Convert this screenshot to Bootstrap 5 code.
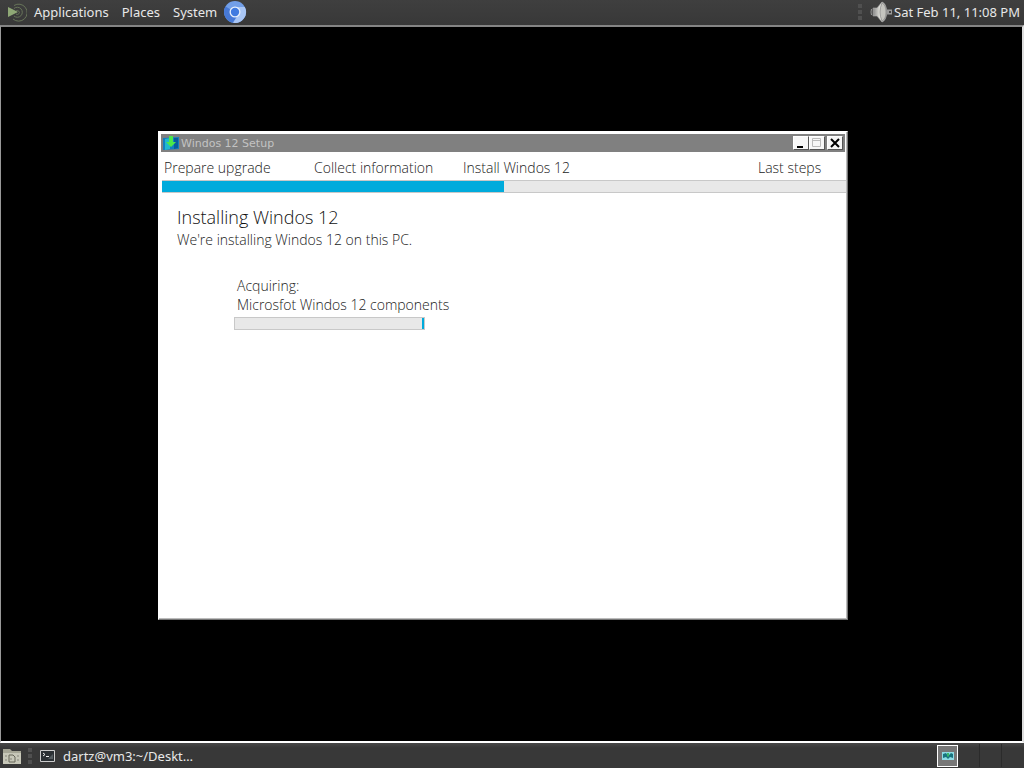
<!DOCTYPE html>
<html lang="en">
<head>
<meta charset="utf-8">
<meta name="viewport" content="width=device-width, initial-scale=1">
<title>Windos 12 Setup</title>
<link href="https://cdn.jsdelivr.net/npm/bootstrap@5.3.0/dist/css/bootstrap.min.css" rel="stylesheet">
<style>
  body { background: #000; font-family: "Noto Sans", sans-serif; font-size: 13px; line-height: 18px; }
  .panel { background: #3a3a3a; color: #e8e8e8; }
  .panel-top { height: 25px; background: linear-gradient(#3f3f3f, #383838); }
  .panel-bottom { height: 25px; background: linear-gradient(#484848, #383838 5px); }
  .panel button { background: none; border: 0; color: inherit; padding: 0; line-height: 24px; }
  .panel-top button { line-height: 22px; height: 24px; }
  .menus { padding-left: 8px; }
  .panel .menu-label { padding: 0 0 0 7px; margin-right: 6px; }
  .desk { border: solid; border-width: 2px 2px 2px 1px; border-color: #858585 #ddd #fff #999; }
  .setup { left: 157px; top: 104px; width: 690px; min-height: 489px; background: #fff; border: 1px solid; border-color: #fff #777 #777 #fff; padding: 2px 1px 1px 2px; box-shadow: inset -1px -1px #bbb; font-family: "Open Sans", sans-serif; font-weight: 300; font-size: 14px; line-height: 19px; color: #222; }
  .titlebar { height: 18px; background: #808080; color: #c3c3c3; font: 11px/16px "DejaVu Sans", sans-serif; padding: 0 2px; margin-right: 1px; }
  .titlebar .caption-text { padding: 2px 0 0 2px; }
  .titlebar button { width: 16px; height: 14px; padding: 0; border: 1px solid; border-color: #fff #555 #555 #fff; background: #f7f7f7; line-height: 0; }
  .titlebar .close-box { margin-left: 2px; }
  .steps { display: grid; grid-template-columns: 150fr 149fr 295fr 88fr; height: 28px; padding: 6px 0 0 3px; margin: 0; list-style: none; }
  .meter { height: 13px; border: 1px solid #c8c8c8; border-radius: 0; background: #e8e8e8; }
  .meter .progress-bar { background: #00abdc; transition: none; }
  .meter-main { border-left: 0; border-right: 0; margin-left: 1px; }
  .meter-main .progress-bar { margin: -1px 0; }
  .stage { padding: 12px 16px 0; }
  .stage h1 { font-size: 18px; line-height: 25px; font-weight: 300; margin: 0; color: #111; }
  .task { margin: 27px 0 0 60px; }
  .task .meter { width: 191px; margin: 3px 0 0 -3px; justify-content: flex-end; }
  .grip { width: 4px; height: 16px; background: repeating-linear-gradient(#505050 0 4px, transparent 4px 6px); }
  .panel .workspace { width: 22px; height: 23px; border-right: 1px solid #2b2b2b; }
  .panel .workspace.current { width: 21px; height: 22px; background: #777; border: 1px solid #fff; }
  svg { display: block; flex: none; }
</style>
</head>
<body class="d-flex flex-column vh-100 overflow-hidden">
  <header class="panel panel-top d-flex justify-content-between align-items-start">
    <nav class="menus d-flex align-items-start" aria-label="Main menu">
      <svg width="19" height="24" viewBox="0 -2 19 24" fill="none">
        <g stroke="#68755a"><path d="M6 3.500A8.500 8.500 0 1 1 5 17"/><path d="M6 6.500A5 5 0 1 1 6 14"/><path d="M8 9a2 2 0 1 1 0 3"/></g>
        <path d="M0 5l10 5-10 5z" fill="#8fa876"/>
      </svg>
      <button type="button" class="menu-label">Applications</button>
      <button type="button" class="menu-label">Places</button>
      <button type="button" class="menu-label">System</button>
      <button type="button" aria-label="Web browser">
        <svg width="24" height="24" viewBox="0 0 24 24">
          <circle cx="12" cy="12" r="11" fill="#729fe8"/>
          <path d="M12 12L2.500 6.500A11 11 0 0 0 10 22.800L15 14z" fill="#4779d6"/>
          <path d="M12 7h9.800A11 11 0 0 1 10 22.800L16 14z" fill="#a9c6f5"/>
          <circle cx="12" cy="12" r="5.500" fill="#e8f0fc"/><circle cx="12" cy="12" r="4.200" fill="#417be0"/>
        </svg>
      </button>
    </nav>
    <div class="d-flex align-items-start pe-1">
      <span class="grip mt-1 me-2"></span>
      <button type="button" aria-label="Volume">
        <svg width="24" height="24" viewBox="0 0 24 24">
          <defs><linearGradient id="metal"><stop stop-color="#888"/><stop offset=".5" stop-color="#e0e0da"/><stop offset="1" stop-color="#999"/></linearGradient></defs>
          <path d="M1.500 9q-1 3 0 6" stroke="#999" fill="none"/>
          <path d="M3 8h4l5-6q4 1 5 10-1 9-5 10l-5-6H3z" fill="url(#metal)" stroke="#aaa" stroke-width=".6"/>
          <path d="M12 3q-4 9 0 18 4-2 4-9t-4-9z" fill="#c4c4bf" stroke="#888" stroke-width=".7"/>
          <path d="M17 9.500h5v5h-5z" fill="#9b9b9b"/><path d="M19 11h2v2h-2z" fill="#444"/>
        </svg>
      </button>
      <button type="button">Sat Feb 11, 11:08 PM</button>
    </div>
  </header>

  <main class="desk flex-grow-1 position-relative">
    <section class="setup position-absolute" aria-label="Windos 12 Setup">
      <div class="titlebar d-flex align-items-center">
        <svg width="16" height="16" viewBox="0 0 16 16">
          <path d="M0 3l16-1v12l-16 1z" fill="#147ec0"/><path d="M2 4l5-1v11l-5 1z" fill="#20b8d0"/>
          <path d="M11 3h4v10l-4 1z" fill="#075c9e"/><path d="M6 1h4v6h3l-5 5-5-5h3z" fill="#4be84a"/>
        </svg>
        <span class="caption-text me-auto">Windos 12 Setup</span>
        <button type="button" aria-label="Minimize"><svg width="14" height="12"><path d="M3 10h6" stroke="#000" stroke-width="2"/></svg></button>
        <button type="button" aria-label="Maximize" disabled><svg width="14" height="12" fill="none" stroke="#bbb"><path d="M2.500 1.500h8v8h-8zM2 3.500h9"/></svg></button>
        <button type="button" aria-label="Close" class="close-box"><svg width="14" height="12"><path d="M3 2l8 8M11 2l-8 8" stroke="#000" stroke-width="2"/></svg></button>
      </div>
      <ol class="steps">
        <li>Prepare upgrade</li><li>Collect information</li><li>Install Windos 12</li><li>Last steps</li>
      </ol>
      <div class="progress meter meter-main" role="progressbar" aria-label="Upgrade" aria-valuenow="50" aria-valuemin="0" aria-valuemax="100">
        <div class="progress-bar" style="width: 50%"></div>
      </div>
      <div class="stage">
        <h1>Installing Windos 12</h1>
        <div>We're installing Windos 12 on this PC.</div>
        <div class="task">
          <div>Acquiring:</div>
          <div>Microsfot Windos 12 components</div>
          <div class="progress meter" role="progressbar" aria-label="Components">
            <div class="progress-bar" style="width: 1%"></div>
          </div>
        </div>
      </div>
    </section>
  </main>

  <footer class="panel panel-bottom d-flex align-items-center">
    <button type="button" aria-label="Show desktop">
      <svg width="24" height="22" viewBox="0 0 24 22">
        <path d="M3 4h7l2 2h9v13H3z" fill="#a5a595"/><path d="M3 8h18v11H3z" fill="#c7c7b8"/>
        <path d="M9 10h4l2 2v5H9z" fill="none" stroke="#666658"/><path d="M5 11h2M5 15h2M17 11h2M17 15h2M11 13v2" stroke="#85857a"/>
      </svg>
    </button>
    <span class="grip ms-1"></span>
    <button type="button" class="d-flex align-items-center ms-2">
      <svg width="15" height="14" viewBox="0 0 15 14"><path d="M.5 1.500h14v11H.5z" fill="#2b3034" stroke="#ccc"/><path d="M3 4l2 1.500L3 7M6 7.500h3" stroke="#eee" fill="none"/><path d="M8 10l5-5v5z" fill="#555c60"/></svg>
      <span class="ms-2">dartz@vm3:~/Deskt…</span>
    </button>
    <div class="d-flex align-items-center ms-auto">
      <button type="button" class="workspace current d-flex align-items-center justify-content-center" aria-label="Workspace 1">
        <svg width="12" height="10" viewBox="0 0 12 10"><path d="M0 1h12v8H0z" fill="#8edce4"/><path d="M1 3l3-1 2 3 3-3 2 1v4L8 6 6 8 4 6 1 7z" fill="#18747e"/><path d="M5 2h2v3l-1 1-1-1z" fill="#37b86a"/></svg>
      </button>
      <button type="button" class="workspace" aria-label="Workspace 2"></button>
      <button type="button" class="workspace" aria-label="Workspace 3"></button>
      <button type="button" class="workspace border-0" aria-label="Workspace 4"></button>
    </div>
  </footer>
<script src="https://cdn.jsdelivr.net/npm/bootstrap@5.3.0/dist/js/bootstrap.bundle.min.js"></script>
</body>
</html>
